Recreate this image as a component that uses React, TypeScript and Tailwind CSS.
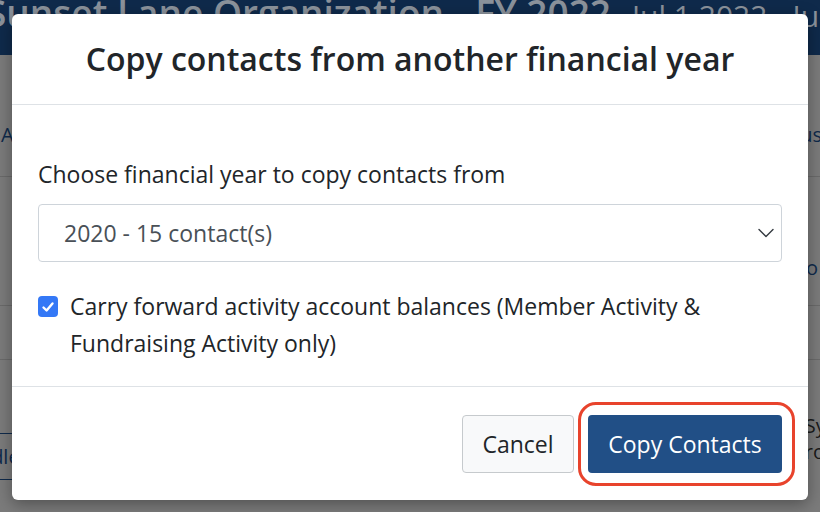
import React from "react";

const font = { fontFamily: '"Open Sans", "Liberation Sans", sans-serif' };

const BackgroundPage = () => (
  <div className="flex h-full w-full flex-col bg-[#7b7b7b]">
    <div className="flex h-[55px] shrink-0 items-end overflow-hidden whitespace-nowrap bg-[#0f2a4b] pb-[24px] text-[#8b929b]">
      <span className="ml-[-14px] text-[37px] font-semibold leading-none">
        Sunset Lane Organization - FY 2022
      </span>
      <span className="ml-[21px] text-[30px] leading-none">Jul 1 2022 - Jun 30 2023</span>
    </div>
    <div className="flex h-[122px] shrink-0 items-end justify-between border-b border-[#6a6a6a] pb-[26px] text-[20px] text-[#0f2a4b]">
      <span className="ml-[1px]">Amount</span>
      <span className="mr-[-2px]">Status</span>
    </div>
    <div className="flex h-[129px] shrink-0 items-end justify-end border-b border-[#6a6a6a] pb-[22px] text-[20px] text-[#0f2a4b]">
      <span className="mr-[2px]">Info</span>
    </div>
    <div className="h-[54px] shrink-0 border-b border-[#6a6a6a]" />
    <div className="flex flex-1 items-start justify-between pt-[73px]">
      <div className="ml-[-60px] flex h-[47px] items-center rounded border border-[#0f2a4b] px-3 text-[20px] text-[#0f2a4b]">
        Handle
      </div>
      <div className="mr-[-30px] mt-[-20px] flex flex-col text-[20px] leading-[26px] text-[#1a1a1a]">
        <span>Sync</span>
        <span>rows</span>
      </div>
    </div>
  </div>
);

const Modal = () => (
  <div className="absolute left-[12px] top-[14px] flex h-[486px] w-[796px] flex-col rounded-md bg-white shadow-[0_4px_16px_rgba(0,0,0,0.35)]">
    <div className="flex h-[91px] shrink-0 items-center justify-center border-b border-[#dee2e6] pb-[1px]">
      <h2 className="text-[32px] font-semibold text-[#212529]">
        Copy contacts from another financial year
      </h2>
    </div>
    <div className="flex h-[282px] shrink-0 flex-col border-b border-[#dee2e6] px-[26px] pt-[54px]">
      <label className="text-[23px] leading-[30px] text-[#212529]">
        Choose financial year to copy contacts from
      </label>
      <div className="mt-[15px] flex h-[58px] items-center justify-between rounded border border-[#ced4da] pl-[25px] pr-[6px]">
        <span className="text-[23px] text-[#495057]">2020 - 15 contact(s)</span>
        <svg width="18" height="18" viewBox="0 0 18 18" fill="none">
          <polyline
            points="2,5.5 9,12.5 16,5.5"
            stroke="#343a40"
            strokeWidth="1.4"
            strokeLinecap="round"
            strokeLinejoin="round"
          />
        </svg>
      </div>
      <div className="mt-[26px] flex items-start gap-[12px]">
        <div className="mt-[8px] flex h-[21px] w-[20px] shrink-0 items-center justify-center rounded-[4px] bg-[#3478f6]">
          <svg width="14" height="14" viewBox="0 0 14 14" fill="none">
            <polyline
              points="2.5,7.5 5.6,10.5 11.5,3.5"
              stroke="white"
              strokeWidth="2.4"
              strokeLinecap="round"
              strokeLinejoin="round"
            />
          </svg>
        </div>
        <span className="text-[23px] leading-[37px] text-[#212529]">
          Carry forward activity account balances (Member Activity &amp; Fundraising Activity only)
        </span>
      </div>
    </div>
    <div className="flex flex-1 items-start justify-end gap-[14px] px-[26px] pt-[28px]">
      <button className="h-[58px] w-[112px] rounded border border-[#c6cacd] bg-[#f8f9fa] text-[23px] text-[#212529]">
        Cancel
      </button>
      <div className="relative">
        <div className="absolute -bottom-[13px] -left-[10px] -right-[13px] -top-[13px] rounded-[18px] border-[3px] border-[#e8432c]" />
        <button className="relative h-[58px] w-[194px] rounded bg-[#214f86] text-[23px] text-white">
          Copy Contacts
        </button>
      </div>
    </div>
  </div>
);

export default function App() {
  return (
    <div className="relative h-[512px] w-[820px] overflow-hidden" style={font}>
      <BackgroundPage />
      <Modal />
    </div>
  );
}
